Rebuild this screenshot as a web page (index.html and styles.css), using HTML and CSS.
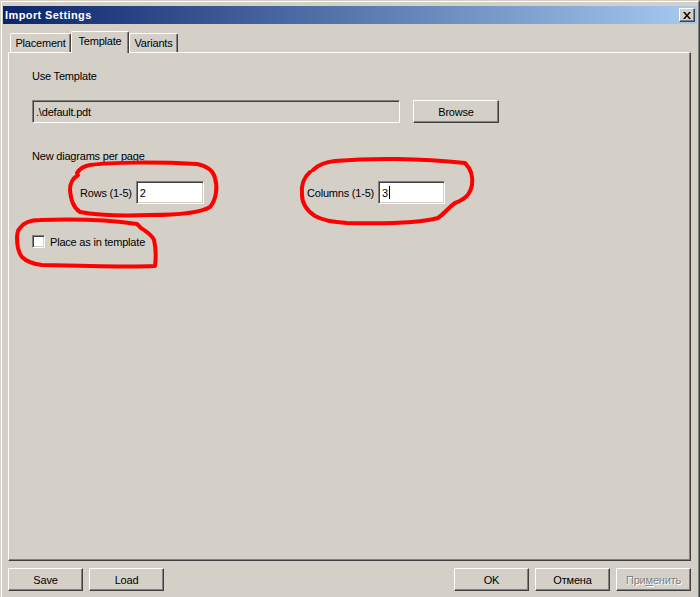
FILE: index.html
```html
<!DOCTYPE html>
<html>
<head>
<meta charset="utf-8">
<title>Import Settings</title>
<link rel="stylesheet" href="styles.css">
</head>
<body>
<div class="window">
  <div class="frame">
    <div class="titlebar">
      <span class="title">Import Settings</span>
      <button class="close" type="button" aria-label="Close">
        <svg width="8" height="7" viewBox="0 0 8 7"><path d="M0 0h2l2 2.5L6 0h2L5 3.5 8 7H6L4 4.5 2 7H0l3-3.5z" fill="#000"/></svg>
      </button>
    </div>
    <div class="body">
      <div class="tabs">
        <div class="tab tab-placement">Placement</div>
        <div class="tab tab-template active">Template</div>
        <div class="tab tab-variants">Variants</div>
      </div>
      <div class="panel">
        <div class="text-line">Use Template</div>
        <div class="template-row">
          <div class="field field-template">.\default.pdt</div>
          <button class="btn btn-browse" type="button">Browse</button>
        </div>
        <div class="text-line per-page">New diagrams per page</div>
        <div class="dims">
          <div class="dim dim-rows">
            <span class="dim-label">Rows (1-5)</span>
            <div class="field field-num">2</div>
          </div>
          <div class="dim">
            <span class="dim-label">Columns (1-5)</span>
            <div class="field field-num field-cols">3<span class="caret"></span></div>
          </div>
        </div>
        <div class="check-row">
          <span class="checkbox"></span>
          <span class="check-label">Place as in template</span>
        </div>
      </div>
      <div class="footer">
        <div class="btn-group">
          <button class="btn" type="button">Save</button>
          <button class="btn" type="button">Load</button>
        </div>
        <div class="btn-group">
          <button class="btn" type="button">OK</button>
          <button class="btn" type="button">Отмена</button>
          <button class="btn btn-disabled" type="button" disabled>При<u>м</u>енить</button>
        </div>
      </div>
    </div>
  </div>
  <svg class="annotations" width="700" height="597" viewBox="0 0 700 597">
    <path d="M77 173 C80 168 84 166 90 165 C110 162 160 162 197 164 C207 166 213 170 215 178 C218 188 216 200 210 207 C200 213 180 215 150 215 C120 216 95 215 80 212 C73 207 71 200 70 190 C70 183 72 179 78 175" />
    <path d="M313 170 C318 165 325 162 335 161 C370 158 420 158 465 163 C472 170 473 178 472 185 C470 194 466 199 455 203 C448 208 445 213 438 218 C420 223 390 224 347 223 C330 222 322 220 315 216 C306 210 302 203 302 195 C301 186 303 178 310 172" />
    <path d="M20 228 C24 222 30 220 40 220 C70 219 110 220 137 224 L141 228 C147 232 152 235 154 240 C156 248 156 258 155 266 C130 267 80 266 42 265 C32 264 26 261 22 257 C18 252 17 246 17 238 C17 233 18 230 20 228" />
  </svg>
</div>
</body>
</html>
```
FILE: styles.css
```css
* {
  box-sizing: border-box;
}

html, body {
  margin: 0;
  padding: 0;
}

body {
  width: 700px;
  height: 597px;
  overflow: hidden;
  background: #d4d0c8;
  font-family: "Liberation Sans", Arial, sans-serif;
  font-size: 11px;
  letter-spacing: -0.2px;
  color: #000;
}

.window {
  position: relative;
  width: 700px;
  height: 597px;
  border-top: 1px solid #d4d0c8;
  border-left: 1px solid #d4d0c8;
  border-right: 1px solid #404040;
  background: #d4d0c8;
}

.frame {
  height: 100%;
  border-top: 1px solid #ffffff;
  border-left: 1px solid #ffffff;
  border-right: 1px solid #808080;
  padding: 4px 1px 0 1px;
}

.titlebar {
  height: 18px;
  display: flex;
  align-items: center;
  justify-content: space-between;
  padding: 0 2px 0 2px;
  background: linear-gradient(to right, #0a246a 0%, #a6caf0 100%);
}

.title {
  color: #fff;
  font-weight: bold;
  font-size: 11px;
  letter-spacing: 0.4px;
}

.close {
  width: 16px;
  height: 14px;
  padding: 0;
  margin: 0;
  display: flex;
  align-items: center;
  justify-content: center;
  background: #d4d0c8;
  border: 1px solid;
  border-color: #ffffff #404040 #404040 #ffffff;
  box-shadow: inset -1px -1px 0 #808080;
}

.body {
  padding: 7px 6px 0 5px;
}

.tabs {
  height: 21px;
  display: flex;
  align-items: flex-end;
  padding-left: 2px;
}

.tab {
  height: 19px;
  display: flex;
  align-items: center;
  justify-content: center;
  padding-bottom: 1px;
  background: #d4d0c8;
  border-top: 1px solid #ffffff;
  border-left: 1px solid #ffffff;
  border-right: 1px solid #404040;
  border-radius: 2px 2px 0 0;
  box-shadow: inset -1px 0 0 #808080;
}

.tab-placement {
  width: 61px;
}

.tab-template {
  width: 58px;
}

.tab-variants {
  width: 49px;
}

.tab.active {
  height: 22px;
  margin-bottom: -1px;
  padding-bottom: 3px;
  position: relative;
  z-index: 1;
}

.panel {
  height: 509px;
  border-top: 1px solid #ffffff;
  border-left: 1px solid #ffffff;
  border-right: 1px solid #404040;
  border-bottom: 1px solid #404040;
  box-shadow: inset -1px -1px 0 #808080;
  padding: 17px 0 0 23px;
}

.text-line {
  height: 13px;
  line-height: 13px;
}

.template-row {
  margin-top: 17px;
  display: flex;
  gap: 13px;
}

.field {
  height: 23px;
  display: flex;
  align-items: center;
  padding-left: 3px;
  border: 1px solid;
  border-color: #808080 #ffffff #ffffff #808080;
  box-shadow: inset 1px 1px 0 #404040, inset -1px -1px 0 #d4d0c8;
  background: #ffffff;
}

.field-template {
  width: 368px;
  background: #d4d0c8;
}

.per-page {
  margin-top: 27px;
}

.dims {
  margin-top: 18px;
  display: flex;
  align-items: center;
  padding-left: 48px;
}

.dim {
  display: flex;
  align-items: center;
  gap: 4px;
}

.dim-rows {
  width: 227px;
  flex: none;
}

.field-num {
  width: 68px;
}

.field-cols {
  width: 67px;
}

.caret {
  display: inline-block;
  width: 1px;
  height: 13px;
  background: #000;
  margin-left: 1px;
}

.check-row {
  margin-top: 31px;
  display: flex;
  align-items: center;
  gap: 5px;
}

.checkbox {
  width: 13px;
  height: 13px;
  border: 1px solid;
  border-color: #808080 #ffffff #ffffff #808080;
  box-shadow: inset 1px 1px 0 #404040, inset -1px -1px 0 #d4d0c8;
  background: #ffffff;
}

.footer {
  margin-top: 7px;
  display: flex;
  justify-content: space-between;
}

.btn-group {
  display: flex;
  gap: 6px;
}

.btn {
  width: 75px;
  height: 23px;
  padding: 0;
  margin: 0;
  font-family: "Liberation Sans", Arial, sans-serif;
  font-size: 11px;
  letter-spacing: -0.2px;
  color: #000;
  background: #d4d0c8;
  border: 1px solid;
  border-color: #ffffff #404040 #404040 #ffffff;
  box-shadow: inset -1px -1px 0 #808080;
}

.btn-browse {
  width: 86px;
}

.btn-disabled {
  color: #808080;
  text-shadow: 1px 1px 0 #ffffff;
}

.annotations {
  position: absolute;
  left: -1px;
  top: -1px;
  pointer-events: none;
}

.annotations path {
  fill: none;
  stroke: #ff0000;
  stroke-width: 4;
  stroke-linecap: round;
  stroke-linejoin: round;
}
```
